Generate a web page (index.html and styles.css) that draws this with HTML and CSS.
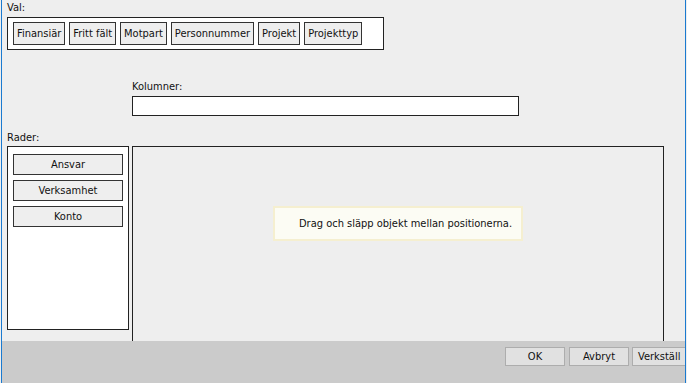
FILE: index.html
```html
<!DOCTYPE html>
<html lang="sv">
<head>
<meta charset="utf-8">
<title>Val</title>
<link rel="stylesheet" href="styles.css">
</head>
<body>
<div class="window">
  <div class="content">
    <div class="label">Val:</div>
    <div class="valbox">
      <span class="chip">Finansiär</span>
      <span class="chip">Fritt fält</span>
      <span class="chip">Motpart</span>
      <span class="chip">Personnummer</span>
      <span class="chip">Projekt</span>
      <span class="chip">Projekttyp</span>
    </div>
    <div class="columns">
      <div class="label">Kolumner:</div>
      <div class="colbox"></div>
    </div>
    <div class="label rader">Rader:</div>
    <div class="grid">
      <div class="rows">
        <div class="rowbtn">Ansvar</div>
        <div class="rowbtn">Verksamhet</div>
        <div class="rowbtn">Konto</div>
      </div>
      <div class="main">
        <div class="hint">Drag och släpp objekt mellan positionerna.</div>
      </div>
    </div>
  </div>
  <div class="footer">
    <button class="btn ok">OK</button>
    <button class="btn">Avbryt</button>
    <button class="btn last">Verkställ</button>
  </div>
</div>
</body>
</html>
```
FILE: styles.css
```css
*, *::before, *::after {
  box-sizing: border-box;
}
html, body {
  margin: 0;
  padding: 0;
  background: #eeeeee;
}
body {
  font-family: "DejaVu Sans Condensed", "DejaVu Sans", sans-serif;
  font-size: 11px;
  color: #111;
}
.window {
  margin-left: 1px;
  width: 685px;
  height: 383px;
  border-left: 1px solid #1a7ad0;
  border-right: 1px solid #1a7ad0;
  display: flex;
  flex-direction: column;
  overflow: hidden;
  background: #eeeeee;
}
.content {
  flex: 1;
  display: flex;
  flex-direction: column;
  padding-left: 5px;
  min-height: 0;
}
.label {
  height: 17px;
  line-height: 15px;
}
.valbox {
  width: 377px;
  height: 33px;
  border: 1px solid #222;
  background: #fff;
  padding: 4px 5px;
  display: flex;
  gap: 4px;
}
.chip {
  height: 23px;
  line-height: 21px;
  border: 1px solid #333;
  background: #eeeeee;
  padding: 0 3px;
  white-space: nowrap;
}
.columns {
  margin-top: 29px;
  margin-left: 125px;
}
.colbox {
  width: 387px;
  height: 20px;
  border: 1px solid #222;
  background: #fff;
}
.rader {
  margin-top: 13px;
  line-height: 17px;
}
.grid {
  flex: 1;
  display: flex;
  gap: 3px;
  align-items: flex-start;
  min-height: 0;
}
.rows {
  flex: none;
  width: 122px;
  height: 184px;
  border: 1px solid #222;
  background: #fff;
  padding: 7px 5px 0;
  display: flex;
  flex-direction: column;
  gap: 5px;
}
.rowbtn {
  height: 21px;
  line-height: 19px;
  border: 1px solid #333;
  background: #eeeeee;
  text-align: center;
}
.main {
  flex: none;
  align-self: stretch;
  width: 532px;
  border: 1px solid #222;
  border-bottom: none;
  padding-top: 59px;
  padding-left: 140px;
}
.hint {
  width: 250px;
  height: 35px;
  line-height: 31px;
  padding-left: 24px;
  background: #fcfcf4;
  border: 2px solid #f5efd0;
  white-space: nowrap;
}
.footer {
  flex: none;
  height: 42px;
  background: #cbcbcb;
  display: flex;
  justify-content: flex-end;
  align-items: flex-start;
  padding-top: 6px;
  gap: 3px;
}
.btn {
  flex: none;
  width: 60px;
  height: 19px;
  padding: 0;
  font: inherit;
  color: #111;
  background: #e1e1e1;
  border: 1px solid #adadad;
}
.btn.ok {
  margin-right: 1px;
}
.btn.last {
  margin-right: -7px;
  text-align: left;
  padding-left: 5px;
}
```
